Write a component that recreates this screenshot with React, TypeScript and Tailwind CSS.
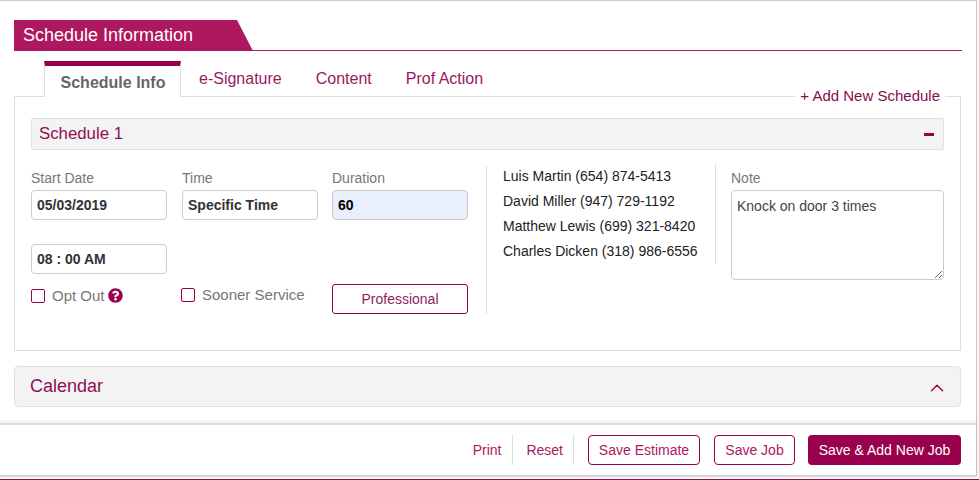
import { ChevronUp } from 'lucide-react';
import { FaQuestionCircle } from 'react-icons/fa';

const inputClass =
  'h-[30px] w-full rounded-[4px] border border-[#ccc] px-[5px] text-[14px] font-bold text-[#333] outline-none';

function Field({ label, value, filled, className }: { label: string; value: string; filled?: boolean; className?: string }) {
  return (
    <div className={`w-[136px] ${className ?? ''}`}>
      <div className="mb-[3px] h-[17px] text-[14px] leading-[17px] text-[#777]">{label}</div>
      <input
        readOnly
        value={value}
        className={`${inputClass} ${filled ? 'bg-[#e8f0fe] text-black' : 'bg-white'}`}
      />
    </div>
  );
}

function Check({ label }: { label: string }) {
  return (
    <label className="flex items-center gap-[7px] text-[15px] leading-[17px] text-[#777]">
      <span className="h-[14px] w-[14px] rounded-[2px] border border-[#99004d] bg-white" />
      {label}
    </label>
  );
}

const contacts = [
  'Luis Martin (654) 874-5413',
  'David Miller (947) 729-1192',
  'Matthew Lewis (699) 321-8420',
  'Charles Dicken (318) 986-6556',
];

export default function App() {
  return (
    <div className="h-[480px] w-[979px] overflow-hidden border-b border-[#8a0f50] bg-white font-['Liberation_Sans',Arial,sans-serif]">
      <div className="h-[476px] w-[977px] border-t border-r border-b border-[#ccc] shadow-[0_1px_2px_rgba(0,0,0,0.2)]">
        <div className="px-[14px] pt-[19px]">
          {/* heading */}
          <div className="flex h-[31px] w-[948px] border-b border-[#b8175f]">
            <div className="h-[31px] w-[239px] bg-[#ae185e] pl-[9px] text-[18px] leading-[31px] text-white [clip-path:polygon(0_0,223px_0,100%_100%,0_100%)]">
              Schedule Information
            </div>
          </div>

          {/* tabs */}
          <div className="relative z-10 mt-[10px] flex h-[36px] pl-[30px]">
            <div className="h-[36px] w-[137px] border-x border-t-[5px] border-x-[#ddd] border-t-[#99004d] bg-white pl-[1px] text-center text-[16px] font-bold leading-[33px] text-[#666]">
              Schedule Info
            </div>
            <div className="ml-[18px] flex gap-[34px] text-[16px] leading-[36px] text-[#99195d]">
              <span>e-Signature</span>
              <span>Content</span>
              <span>Prof Action</span>
            </div>
          </div>

          {/* schedule box */}
          <div className="relative mt-[-1px] h-[255px] w-[947px] border border-[#ddd] px-[16px] pt-[21px]">
            <span className="absolute right-[15px] top-[-10px] bg-white px-[5px] text-[15px] leading-[18px] text-[#860c50]">
              + Add New Schedule
            </span>
            <div className="flex h-[32px] items-center justify-between rounded-[2px] border border-[#e2e2e2] bg-[#f3f3f3] pl-[7px] pr-[9px] text-[16.8px] text-[#8f0f55]">
              <span className="pb-[1px]">Schedule 1</span>
              <span className="h-[3px] w-[10px] bg-[#99004d]" />
            </div>

            <div className="mt-[16px] flex">
              <div className="w-[437px] pt-[4px]">
                <div className="flex gap-[14px]">
                  <Field label="Start Date" value="05/03/2019" />
                  <Field className="ml-[1px]" label="Time" value="Specific Time" />
                  <Field label="Duration" value="60" filled />
                </div>
                <input readOnly value="08 : 00 AM" className={`${inputClass} mt-[24px] !w-[136px]`} />
                <div className="mt-[10px] flex items-start">
                  <div className="flex w-[150px] items-center gap-[3px] pt-[3px]">
                    <Check label="Opt Out" />
                    <FaQuestionCircle className="h-[15px] w-[15px] text-[#99004d]" />
                  </div>
                  <div className="w-[151px] pt-[2px]">
                    <Check label="Sooner Service" />
                  </div>
                  <div className="flex h-[30px] w-[136px] items-center justify-center rounded-[3px] border border-[#99004d] text-[14px] text-[#8f1f5c]">
                    Professional
                  </div>
                </div>
              </div>

              <div className="ml-[18px] h-[148px] w-[230px] border-l border-[#ddd]">
                <div className="h-[100px] border-r border-[#ddd] px-[16px] text-[14px] leading-[25px] text-[#222]">
                  <div className="-mt-[2px]">
                    {contacts.map((c) => (
                      <div key={c}>{c}</div>
                    ))}
                  </div>
                </div>
              </div>

              <div className="ml-[15px] w-[213px] pt-[4px]">
                <div className="mb-[3px] h-[17px] text-[14px] leading-[17px] text-[#777]">Note</div>
                <textarea
                  readOnly
                  value="Knock on door 3 times"
                  className="block h-[90px] w-full rounded-[4px] border border-[#ccc] px-[5px] py-[5px] text-[14px] leading-[20px] text-[#444] outline-none"
                />
              </div>
            </div>
          </div>

          {/* calendar */}
          <div className="mt-[15px] flex h-[41px] w-[947px] items-center justify-between rounded-[4px] border border-[#e2e2e2] bg-[#f3f3f3] pl-[15px] pr-[12px] text-[18px] text-[#8f0f55]">
            <span>Calendar</span>
            <ChevronUp className="mt-[3px] h-[22px] w-[22px] text-[#99004d]" strokeWidth={1.5} />
          </div>
        </div>

        {/* footer */}
        <div className="mt-[16px] flex h-[52px] items-center justify-end border-t-2 border-[#ddd] pr-[15px] text-[14px] text-[#ae185e] shadow-[0_-2px_3px_rgba(0,0,0,0.06)]">
          <span className="flex h-[30px] items-center border-r border-[#ddd] pr-[11px]">Print</span>
          <span className="flex h-[30px] items-center border-r border-[#ddd] pl-[13px] pr-[10px]">Reset</span>
          <button className="ml-[14px] h-[30px] w-[112px] rounded-[4px] border border-[#99004d] bg-white">Save Estimate</button>
          <button className="ml-[14px] h-[30px] w-[81px] rounded-[4px] border border-[#99004d] bg-white">Save Job</button>
          <button className="ml-[13px] h-[30px] w-[153px] rounded-[4px] bg-[#99004d] text-white">Save &amp; Add New Job</button>
        </div>
      </div>
    </div>
  );
}
